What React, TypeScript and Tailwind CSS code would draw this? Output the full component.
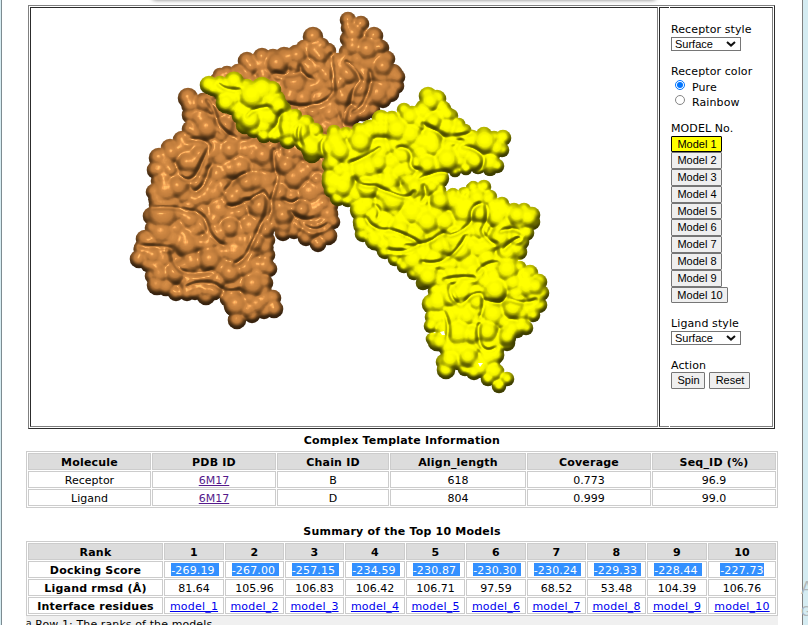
import React from "react";

type Ball = [number, number, number];

const parse = (s: string): Ball[] =>
  s.trim().split(/\s+/).map((t) => t.split(",").map(Number) as Ball);

// Each entry is "x,y,radius" of one bump of the molecular surface.
const receptorEdge = parse(`
348,20,8 361,24,8 374,36,9 381,48,8 387,59,8 397,77,8 396,86,8 391,94,8 383,100,8 372,110,8 350,130,8
332,160,8 333,190,8 331,206,7 333,222,7 328,236,9 318,244,8 306,238,8 294,231,8 283,233,8 272,224,8 267,240,8
267,255,8 269,269,8 265,283,8 273,298,8 274,309,9 264,311,8 252,315,8 237,320,9 233,308,8 227,299,7
214,291,9 206,296,9 195,292,8 187,293,8 176,293,8 166,287,9 157,285,10 153,276,8 148,265,7 139,259,9 142,248,8
145,239,9 152,228,7 152,216,9 156,205,7 154,192,8 158,181,7 156,170,9 159,158,10 170,148,9 182,140,9 190,129,8
191,115,9 188,98,10 201,104,8 213,90,8 220,75,7 227,74,8 238,72,8 247,61,9 262,57,9 273,57,8 284,56,9 296,53,8
304,48,8 313,37,10 322,45,7 328,51,8 337,60,7 347,52,8 348,39,8 348,28,7`);

const receptorInner = parse(`
190,220,10 162,233,12 163,215,14 192,262,10 175,273,10 230,273,10 235,253,12 217,235,11 193,163,9 188,172,9
184,179,8 200,155,9 217,175,10 240,167,11 263,156,10 265,182,11 256,181,9 247,183,9 240,190,9 233,198,9 260,207,11
205,196,10 166,191,12 178,187,10 220,210,12 250,227,11 255,242,9 257,305,9 236,305,11 253,285,11 264,266,9
187,245,11 210,260,11 153,256,9 294,178,11 286,166,9 310,193,12 279,193,9 302,210,8 323,226,8 311,230,8 283,216,9
316,209,9 290,153,8 207,128,11 200,118,9 204,103,9 225,127,9 213,150,12 230,150,10 187,163,9 309,69,10 320,57,7
277,64,10 287,58,9 297,56,9 295,84,12 317,84,11 303,99,10 290,97,9 320,99,9 327,76,9 348,74,10 353,34,9 353,47,9
367,50,10 369,62,11 380,47,6 383,67,9 363,76,9 360,89,9 343,97,9 330,114,9 377,94,11 350,116,9 363,111,9
313,112,8 337,84,8 246,150,10 265,230,8 230,228,9 200,280,10 245,268,9`);

const ligandEdge = parse(`
209,85,9 220,83,7 234,81,9 247,87,8 262,86,9 272,90,9 276,99,9 283,109,8 295,116,7 306,123,8 315,131,8 323,140,6
334,132,7 346,134,7 359,130,7 369,130,8 381,119,9 392,119,8 404,110,7 412,114,8 423,107,7 428,96,9 437,99,9
443,109,8 451,116,7 459,124,6 465,130,6 473,137,6 484,135,8 494,138,7 503,138,8 502,150,7 497,166,7 490,169,7
478,167,7 466,169,6 455,171,6 441,176,6 441,190,5 453,194,6 464,193,6 473,188,7 484,187,7 490,197,7
502,204,7 514,210,7 524,210,7 532,215,8 532,222,8 526,233,8 521,242,8 519,252,8 511,260,7 520,267,6 530,273,8
539,282,8 541,293,8 539,305,8 533,315,7 526,328,7 517,331,7 507,343,8 497,349,7 495,360,6
498,371,6 507,379,7 499,386,7 488,379,7 474,372,8 465,369,7 458,363,7 446,370,9 444,362,8 449,354,8 437,342,9
432,339,6 444,331,7 431,326,7 432,317,7 432,304,10 436,291,8 423,283,7 414,273,7 404,266,7 395,259,7 385,251,8
375,241,8 363,234,8 360,222,7 358,207,7 348,200,7 338,198,8 332,190,8 330,177,8 330,165,8 321,150,8 312,154,9
303,143,8 288,141,8 275,136,7 264,136,7 254,130,8 245,125,9 240,116,8 232,108,7 226,105,8 222,95,7 213,89,7`);

const ligandInner = parse(`
370,130,9 335,142,10 340,151,10 362,170,11 370,168,10 378,163,9 402,155,11 388,183,10 415,188,9 333,182,10
343,187,10 427,165,9 432,137,10 432,147,10 447,160,11 463,152,10 475,160,10 485,142,11 490,163,9 410,117,9
397,130,11 404,140,10 410,135,11 360,142,11 447,115,7 430,102,9 433,122,8 447,128,9 460,132,8 367,188,10 380,150,11
432,187,7 440,201,9 460,204,9 477,199,9 393,200,12 375,218,11 412,213,12 427,222,11 445,222,10 463,213,10
480,213,9 480,230,10 497,217,10 517,216,9 503,225,9 528,218,9 517,237,8 375,240,9 415,235,11 457,240,12 448,245,10
438,247,9 400,230,10 367,205,9 398,245,12 408,248,9 418,241,10 433,260,11 460,250,11 468,263,11 413,260,11
428,277,10 463,292,10 477,302,9 495,290,11 487,297,10 450,317,10 458,333,12 460,347,12 467,317,9 487,332,10
488,348,9 493,315,11 513,308,10 521,313,8 527,287,10 507,270,11 493,277,9 513,283,9 535,287,8 522,326,7 512,329,8
507,337,8 487,260,10 507,253,9 500,238,10 438,302,11 440,342,8 473,335,9 487,246,9 450,360,9 468,357,9 234,82,9
262,90,11 252,96,12 268,98,9 226,103,9 250,120,10 268,117,11 286,130,9 300,132,9 305,140,9 312,148,10 278,106,9
440,280,9 475,275,10 450,298,8`);

// Deep folds between the lobes of each surface.
const receptorFolds = [
  "M274 150Q272 165 278 176Q276 190 271 200Q272 212 268 222",
  "M227 206Q236 208 247 202Q256 196 264 192Q270 200 266 214Q258 232 250 248Q246 260 234 265",
  "M152 208Q172 206 190 211Q204 212 207 226Q211 240 224 246",
  "M138 246Q156 246 171 248Q170 262 181 271Q196 277 212 270",
  "M187 287Q200 280 216 285Q224 294 240 290",
  "M210 167Q207 185 196 192M226 190Q235 178 245 174",
  "M187 140Q205 138 210 146Q203 160 196 176Q188 184 180 176",
  "M207 100Q216 110 217 122Q224 134 236 138",
  "M331 54Q333 72 334 92Q326 105 308 106Q296 108 288 104",
  "M275 73Q290 78 300 73M300 66Q302 78 314 80",
  "M346 62Q356 70 361 80Q352 90 350 104Q344 114 344 126",
  "M370 72Q373 84 366 98Q362 110 353 112",
  "M283 200Q292 206 298 200M290 212Q304 224 314 218M300 222Q314 236 328 224",
  "M243 201Q249 198 251 203",
];
const ligandFolds = [
  "M420 179Q434 172 447 172M424 186Q428 196 422 201",
  "M350 163Q366 158 380 148M354 178Q358 188 374 186Q386 192 398 196Q410 200 414 192",
  "M398 148Q412 146 411 162Q408 170 420 170",
  "M423 124Q434 130 446 137Q460 137 472 133M438 132Q442 142 462 140",
  "M463 147Q480 148 484 160Q484 168 476 172",
  "M375 205Q382 210 378 218M366 218Q372 232 390 230Q410 236 420 244",
  "M405 246Q420 246 434 240Q442 230 450 236Q466 232 472 220Q470 208 480 204",
  "M388 250Q404 254 418 246M422 262Q436 266 448 258Q460 250 466 236",
  "M444 280Q458 276 474 278M450 286Q448 300 462 306Q472 292 482 294Q486 306 480 318",
  "M478 272Q486 262 498 263M504 250Q512 240 520 238",
  "M484 300Q500 306 510 300Q524 306 536 300",
  "M478 340Q484 356 496 348M480 324Q476 332 480 342",
  "M444 312Q450 324 448 338",
  "M247 116Q256 106 270 108M282 112Q276 120 280 134M300 126Q296 136 302 146",
  "M218 84Q226 92 240 90M325 138Q318 144 324 156",
  "M500 232Q514 226 522 234M486 206Q490 218 482 230Q484 240 496 244",
];

const inside = (x: number, y: number, poly: Ball[]) => {
  let hit = false;
  for (let i = 0, j = poly.length - 1; i < poly.length; j = i++) {
    const [xi, yi] = poly[i];
    const [xj, yj] = poly[j];
    if (yi > y !== yj > y && x < ((xj - xi) * (y - yi)) / (yj - yi) + xi) hit = !hit;
  }
  return hit;
};

const filler = (poly: Ball[], inner: Ball[], seed: number): Ball[] => {
  const out: Ball[] = [];
  let s = seed;
  const rnd = () => {
    s = (s * 16807) % 2147483647;
    return s / 2147483647;
  };
  for (let y = 14; y < 395; y += 8)
    for (let x = 130; x < 550; x += 8) {
      const px = x + rnd() * 7;
      const py = y + rnd() * 7;
      const r = 7 + rnd() * 3;
      const free = [...inner, ...out].every(([a, b, q]) => Math.hypot(a - px, b - py) > q * 0.9);
      if (free && inside(px, py - 4, poly) && inside(px, py + 4, poly)) out.push([px, py, r]);
    }
  return out;
};

const levels = [58, 70, 82, 96, 116, 138];
const grey = (v: number) => `rgb(${v},${v},${v})`;

function Surface({ edge, inner, folds, seed, filter }: { edge: Ball[]; inner: Ball[]; folds: string[]; seed: number; filter: string }) {
  const draw = (balls: Ball[], base: number, spread: number, grow: number) =>
    balls.map(([x, y, r], i) => (
      <circle
        key={`${base}-${i}`}
        cx={x}
        cy={y}
        r={r + grow}
        fill={`url(#h${base + ((i * 7 + 3) % spread)})`}
        className="mix-blend-lighten"
      />
    ));
  return (
    <g filter={`url(#${filter})`}>
      <polygon points={edge.map(([x, y]) => `${x},${y}`).join(" ")} fill={grey(100)} />
      {draw(edge, 0, 3, 0.3)}
      {draw(filler(edge, inner, seed), 2, 2, 1)}
      {draw(inner, 3, 3, 1.4)}
      <g fill="none" stroke="#000" strokeLinecap="round" strokeOpacity="0.3">
        {folds.map((d) => (
          <path key={d} d={d} strokeWidth="2.6" />
        ))}
      </g>
    </g>
  );
}

function Relief({ id, r, g, b, shine }: { id: string; r: string; g: string; b: string; shine: string }) {
  return (
    <filter id={id} x="100" y="0" width="480" height="410" filterUnits="userSpaceOnUse" colorInterpolationFilters="sRGB">
      <feColorMatrix in="SourceGraphic" values="0 0 0 0 0  0 0 0 0 0  0 0 0 0 0  1 0 0 0 0" result="raw" />
      <feGaussianBlur in="raw" stdDeviation="1.5" result="height" />
      <feDiffuseLighting in="height" surfaceScale="19" diffuseConstant="1.08" lightingColor="#ffffff" result="lit">
        <feDistantLight azimuth="262" elevation="72" />
      </feDiffuseLighting>
      <feComponentTransfer in="lit" result="body">
        <feFuncR type="table" tableValues={r} />
        <feFuncG type="table" tableValues={g} />
        <feFuncB type="table" tableValues={b} />
      </feComponentTransfer>
      <feGaussianBlur in="raw" stdDeviation="2.2" result="smooth" />
      <feSpecularLighting in="smooth" surfaceScale="17" specularConstant="0.42" specularExponent="60" lightingColor={shine} result="spec">
        <feDistantLight azimuth="245" elevation="55" />
      </feSpecularLighting>
      <feComposite in="body" in2="spec" operator="arithmetic" k2="1" k3="1" result="sum" />
      <feComposite in="sum" in2="SourceAlpha" operator="in" />
    </filter>
  );
}

function Molecule() {
  return (
    <svg width="626" height="418" viewBox="31 8 626 418" className="block">
      <defs>
        {levels.map((v, i) => (
          <radialGradient key={i} id={`h${i}`}>
            <stop offset="0" stopColor={grey(v + 100)} />
            <stop offset="0.3" stopColor={grey(v + 95)} />
            <stop offset="0.55" stopColor={grey(v + 83)} />
            <stop offset="0.75" stopColor={grey(v + 63)} />
            <stop offset="0.9" stopColor={grey(v + 36)} />
            <stop offset="1" stopColor={grey(v)} />
          </radialGradient>
        ))}
        <Relief id="receptor" r="0.22 0.36 0.55 0.74 0.81" g="0.14 0.23 0.35 0.48 0.53" b="0.06 0.1 0.16 0.23 0.26" shine="#b89468" />
        <Relief id="ligand" r="0.25 0.42 0.68 0.94 1" g="0.25 0.42 0.68 0.94 1" b="0 0 0 0 0" shine="#202000" />
      </defs>
      <Surface edge={receptorEdge} inner={receptorInner} folds={receptorFolds} seed={91} filter="receptor" />
      <Surface edge={ligandEdge} inner={ligandInner} folds={ligandFolds} seed={417} filter="ligand" />
      <g fill="#fff">
        <path d="M450 183L462 180L476 177L494 176L494 180L482 179L471 181L464 187L453 188z" />
        <path d="M440 332l4-1 1 4-3 0z" />
        <path d="M478 363l5 0-3 4z" />
      </g>
    </svg>
  );
}

function Select() {
  return (
    <div className="flex h-[14px] w-[70px] items-center justify-between border border-[#767676] bg-white pl-[3px] pr-1 font-['Liberation_Sans',Arial,sans-serif] text-[11px] leading-[12px]">
      <span>Surface</span>
      <svg width="10" height="6" viewBox="0 0 10 6">
        <path d="M1 1l4 3.6L9 1" fill="none" stroke="#111" strokeWidth="2" />
      </svg>
    </div>
  );
}

function Radio({ label, on }: { label: string; on?: boolean }) {
  return (
    <div className="flex h-[15px] items-center">
      <span
        className={
          on
            ? "mb-[3px] ml-1 flex size-[10px] items-center justify-center rounded-full border border-[#0075ff]"
            : "mb-[3px] ml-1 flex size-[10px] items-center justify-center rounded-full border border-[#858585]"
        }
      >
        {on && <span className="size-[6px] rounded-full bg-[#0075ff]" />}
      </span>
      <span className="ml-[7px] mt-[2px] tracking-[0.1px]">{label}</span>
    </div>
  );
}

const button =
  "flex items-center justify-center rounded-[1px] border pl-px font-['Liberation_Sans',Arial,sans-serif] text-[11px] leading-none";

function Controls() {
  return (
    <div className="flex flex-col items-start pt-[14px] leading-[14px]">
      <div className="h-[15px] leading-[16px] tracking-[0.1px]">Receptor style</div>
      <Select />
      <div className="mt-[13px] h-[15px] leading-[16px] tracking-[0.1px]">Receptor color</div>
      <Radio label="Pure" on />
      <Radio label="Rainbow" />
      <div className="mt-[12px] h-[14.5px] leading-[16px] tracking-[0.1px]">MODEL No.</div>
      {Array.from({ length: 10 }, (_, i) => (
        <div
          key={i}
          className={`${button} h-[16.8px] ${i === 0 ? "border-black bg-[#ffff00] pt-px" : "border-[#767676] bg-[#efefef]"} ${i === 9 ? "w-[57px]" : "w-[51px]"}`}
        >
          Model {i + 1}
        </div>
      ))}
      <div className="mt-[12.5px] h-[15px] leading-[16px] tracking-[0.1px]">Ligand style</div>
      <Select />
      <div className="mt-[13px] h-[14px] leading-[16px] tracking-[0.1px]">Action</div>
      <div className="flex gap-1">
        <div className={`${button} h-[17px] w-[34px] border-[#767676] bg-[#efefef]`}>Spin</div>
        <div className={`${button} h-[17px] w-[41px] border-[#767676] bg-[#efefef]`}>Reset</div>
      </div>
    </div>
  );
}

const plain = "flex h-[17px] items-center justify-center border border-[#ccc] whitespace-nowrap leading-[15px]";
const cell = `${plain} pt-[2px]`;
const bold = "font-bold tracking-[0.2px]";
const head = `${cell} ${bold} bg-[#dcdcdc]`;

function TemplateTable() {
  const rows = [
    ["Receptor", "6M17", "B", "618", "0.773", "96.9"],
    ["Ligand", "6M17", "D", "804", "0.999", "99.0"],
  ];
  return (
    <div className="grid h-[57px] w-[752px] grid-cols-[123px_124px_112px_136px_124px_124px] content-start gap-[1px] border border-[#ccc] p-[1px]">
      {["Molecule", "PDB ID", "Chain ID", "Align_length", "Coverage", "Seq_ID (%)"].map((t) => (
        <div key={t} className={head}>{t}</div>
      ))}
      {rows.map((row) =>
        row.map((t, i) => (
          <div key={row[0] + i} className={cell}>
            {i === 1 ? <span className="text-[#551a8b] underline">{t}</span> : t}
          </div>
        )),
      )}
    </div>
  );
}

const scores = ["-269.19", "-267.00", "-257.15", "-234.59", "-230.87", "-230.30", "-230.24", "-229.33", "-228.44", "-227.73"];
const rmsd = ["81.64", "105.96", "106.83", "106.42", "106.71", "97.59", "68.52", "53.48", "104.39", "106.76"];

function SummaryTable() {
  return (
    <div className="grid h-[75px] w-[752px] grid-cols-[135px_60px_59px_59px_60px_59px_60px_59px_59px_60px_68px] content-start gap-[1px] border border-[#ccc] p-[1px]">
      <div className={head}>Rank</div>
      {scores.map((s, i) => (
        <div key={s} className={head}>{i + 1}</div>
      ))}
      <div className={`${cell} ${bold}`}>Docking Score</div>
      {scores.map((s, i) => (
        <div key={s} className={plain}>
          <span
            className={
              i === 9
                ? "h-[13px] bg-[#3390ff] leading-[15px] tracking-[0.15px] text-white"
                : "-mr-[2px] h-[13px] bg-[#3390ff] pr-[4px] leading-[15px] tracking-[0.15px] text-white"
            }
          >
            {s}
          </span>
        </div>
      ))}
      <div className={`${cell} ${bold}`}>Ligand rmsd (Å)</div>
      {rmsd.map((s) => (
        <div key={s} className={cell}>{s}</div>
      ))}
      <div className={`${cell} ${bold}`}>Interface residues</div>
      {scores.map((s, i) => (
        <div key={s} className={cell}>
          <span className="tracking-[0.2px] text-[#0000ee] underline">model_{i + 1}</span>
        </div>
      ))}
    </div>
  );
}

export default function App() {
  return (
    <div className="relative flex h-[625px] w-[808px] overflow-hidden bg-white font-['DejaVu_Sans',Verdana,sans-serif] text-[11px] text-black">
      <div className="w-[2px] shrink-0 border-r border-[#7d8b91] bg-[#d5ecf2]" />
      <main className="flex w-[800px] shrink-0 flex-col items-start overflow-hidden pl-6">
        <div className="ml-[126px] -mt-[10px] h-[10px] w-[504px] shrink-0 rounded-[4px] shadow-[0_0_4px_#777]" />
        <div className="ml-[2px] mt-[5px] flex h-[424px] w-[747px] shrink-0 gap-[1px] border border-t-[#808080] border-l-[#808080] border-r-[#2c2c2c] border-b-[#2c2c2c] p-[1px]">
          <div className="w-[628px] border border-t-[#2c2c2c] border-l-[#2c2c2c] border-r-[#808080] border-b-[#808080]">
            <Molecule />
          </div>
          <div className="w-[10px] border-y border-l border-t-[#2c2c2c] border-l-[#2c2c2c] border-b-[#808080]" />
          <div className="w-[103px] border-y border-r border-t-[#2c2c2c] border-r-[#808080] border-b-[#808080] pl-[1px]">
            <Controls />
          </div>
        </div>
        <div className="flex h-[22px] w-[752px] shrink-0 items-center justify-center pt-[2px] font-bold tracking-[0.2px]">Complex Template Information</div>
        <TemplateTable />
        <div className="flex h-[33px] w-[752px] shrink-0 items-end justify-center pb-[1px] font-bold tracking-[0.2px]">Summary of the Top 10 Models</div>
        <SummaryTable />
        <div className="h-[20px] w-[752px] shrink-0 whitespace-nowrap bg-[#f0f0f0] leading-[17px] tracking-[0.1px]">
          <span className="inline-block -translate-y-[2px] text-[9px]">a</span> Row 1: The ranks of the models.
        </div>
      </main>
      <div className="w-[6px] shrink-0 border-l border-[#808080] bg-[#d5ecf2]" />
      <div className="absolute left-[801px] top-[577px] font-['Liberation_Sans',Arial,sans-serif] text-[18px] leading-[23px] text-[#b0b8bb]">
        <div>A</div>
        <div className="text-[14px]">G</div>
      </div>
    </div>
  );
}
